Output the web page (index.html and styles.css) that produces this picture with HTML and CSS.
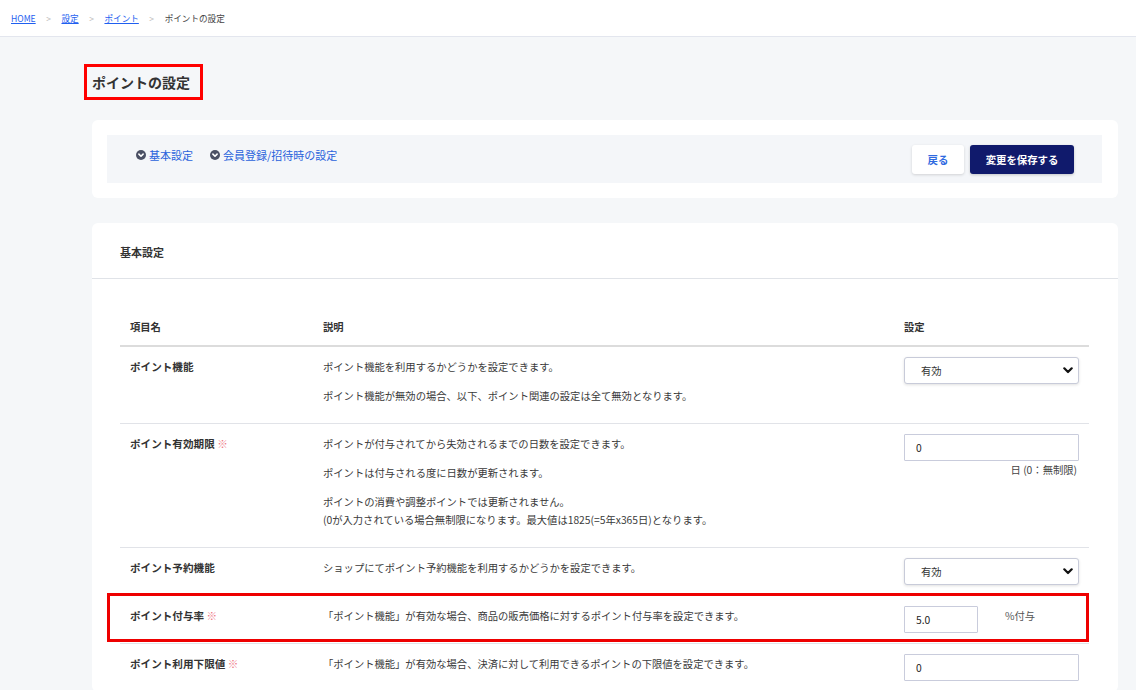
FILE: index.html
```html
<!DOCTYPE html>
<html lang="ja">
<head>
  <meta charset="UTF-8">
  <title>ポイントの設定</title>
  <link rel="stylesheet" href="styles.css">
</head>
<body>

  <nav class="breadcrumb">
    <a href="#">HOME</a>
    <span class="sep">&gt;</span>
    <a href="#">設定</a>
    <span class="sep">&gt;</span>
    <a href="#">ポイント</a>
    <span class="sep">&gt;</span>
    <span class="current">ポイントの設定</span>
  </nav>

  <main class="main">
    <h1 class="page-title">ポイントの設定</h1>

    <!-- anchor links and actions -->
    <section class="card">
      <div class="toolbar">
        <div class="anchors">
          <a href="#" class="anchor">
            <svg width="10" height="10" viewBox="0 0 10 10"><circle cx="5" cy="5" r="5" fill="#4b5064"/><path d="M2.9 4.1 5 6.2 7.1 4.1" fill="none" stroke="#fff" stroke-width="1.6" stroke-linecap="round" stroke-linejoin="round"/></svg>
            基本設定
          </a>
          <a href="#" class="anchor">
            <svg width="10" height="10" viewBox="0 0 10 10"><circle cx="5" cy="5" r="5" fill="#4b5064"/><path d="M2.9 4.1 5 6.2 7.1 4.1" fill="none" stroke="#fff" stroke-width="1.6" stroke-linecap="round" stroke-linejoin="round"/></svg>
            会員登録/招待時の設定
          </a>
        </div>
        <div class="actions">
          <button class="btn btn-back">戻る</button>
          <button class="btn btn-save">変更を保存する</button>
        </div>
      </div>
    </section>

    <!-- basic settings -->
    <section class="card settings">
      <div class="card-header">基本設定</div>
      <div class="card-body">
        <div class="grid">
          <div class="row head">
            <div class="cell">項目名</div>
            <div class="cell">説明</div>
            <div class="cell">設定</div>
          </div>

          <div class="row">
            <div class="cell label">ポイント機能</div>
            <div class="cell desc">
              <p>ポイント機能を利用するかどうかを設定できます。</p>
              <p>ポイント機能が無効の場合、以下、ポイント関連の設定は全て無効となります。</p>
            </div>
            <div class="cell">
              <div class="select">有効</div>
            </div>
          </div>

          <div class="row">
            <div class="cell label">ポイント有効期限 <span class="req">※</span></div>
            <div class="cell desc">
              <p>ポイントが付与されてから失効されるまでの日数を設定できます。</p>
              <p>ポイントは付与される度に日数が更新されます。</p>
              <p>ポイントの消費や調整ポイントでは更新されません。<br>(0が入力されている場合無制限になります。最大値は1825(=5年x365日)となります。</p>
            </div>
            <div class="cell">
              <input class="input" type="text" value="0">
              <div class="note">日 (0：無制限)</div>
            </div>
          </div>

          <div class="row">
            <div class="cell label">ポイント予約機能</div>
            <div class="cell desc">
              <p>ショップにてポイント予約機能を利用するかどうかを設定できます。</p>
            </div>
            <div class="cell">
              <div class="select">有効</div>
            </div>
          </div>

          <div class="row marked">
            <div class="cell label">ポイント付与率 <span class="req">※</span></div>
            <div class="cell desc">
              <p>「ポイント機能」が有効な場合、商品の販売価格に対するポイント付与率を設定できます。</p>
            </div>
            <div class="cell inline">
              <input class="input short" type="text" value="5.0">
              <span class="unit">%付与</span>
            </div>
          </div>

          <div class="row">
            <div class="cell label">ポイント利用下限値 <span class="req">※</span></div>
            <div class="cell desc">
              <p>「ポイント機能」が有効な場合、決済に対して利用できるポイントの下限値を設定できます。</p>
            </div>
            <div class="cell">
              <input class="input" type="text" value="0">
            </div>
          </div>
        </div>
      </div>
    </section>
  </main>

</body>
</html>
```

FILE: styles.css
```css
html, body {
  overflow: hidden;
}

body {
  margin: 0;
  font-family: "Noto Sans CJK JP", "Noto Sans", sans-serif;
  color: #333;
  background-color: #f5f7f9;
}

/* Breadcrumb */
.breadcrumb {
  height: 36px;
  display: flex;
  align-items: center;
  gap: 10.5px;
  padding-left: 11px;
  background-color: #fff;
  border-bottom: 1px solid #e3e6ee;
  font-size: 8.6px;
}

.breadcrumb a {
  color: #1f5ff0;
}

.breadcrumb .sep {
  color: #bbb;
}

.breadcrumb .current {
  color: #444;
}

.main {
  padding: 27px 18px 0 92px;
}

.page-title {
  display: inline-block;
  margin: 0 0 20px -8px;
  padding: 5px 10px 5px 5px;
  font-size: 14px;
  line-height: 20px;
  color: #333;
  border: 3px solid #f00;
}

/* Cards */
.card {
  background-color: #fff;
  border-radius: 6px;
  margin-bottom: 25px;
}

.card:first-of-type {
  padding: 15px 16px 15px 15px;
}

.toolbar {
  height: 48px;
  display: flex;
  justify-content: space-between;
  align-items: center;
  padding: 0 28px 0 29px;
  background-color: #f4f6f9;
}

.anchors {
  display: flex;
  gap: 17px;
  align-self: flex-start;
  padding-top: 11px;
}

.anchor {
  display: flex;
  align-items: center;
  gap: 3px;
  font-size: 11px;
  line-height: 18px;
  color: #2a63dc;
  text-decoration: none;
}

.actions {
  display: flex;
  gap: 6px;
}

.btn {
  height: 29px;
  border: none;
  border-radius: 3px;
  font-family: inherit;
  font-size: 10.4px;
  font-weight: bold;
  cursor: pointer;
}

.btn-back {
  width: 52px;
  background-color: #fff;
  color: #2f6ae0;
  box-shadow: 0 1px 3px rgba(0, 0, 0, 0.15);
}

.btn-save {
  width: 104px;
  background-color: #101a6c;
  color: #fff;
  box-shadow: 0 1px 3px rgba(0, 0, 0, 0.2);
}

/* Settings table */
.card-header {
  padding: 20px 28px 17px;
  font-size: 11px;
  font-weight: bold;
  line-height: 18px;
  border-bottom: 1px solid #e0e3e8;
}

.card-body {
  padding: 26px 29px 0 28px;
}

.row {
  display: grid;
  grid-template-columns: 193px 581px 195px;
  border-bottom: 1px solid #e1e3e8;
  font-size: 10.3px;
  line-height: 18px;
}

.row.head {
  border-bottom: 2px solid #dcdcdc;
  font-weight: bold;
}

.row.head .cell {
  padding: 13px 10px 9px;
}

.cell {
  padding: 10px 10px 9px;
}

.label {
  padding-top: 11px;
  font-size: 10.6px;
  font-weight: bold;
}

.req {
  color: #ee7482;
  font-weight: normal;
}

.desc {
  padding-top: 11px;
  color: #3a3a3a;
}

.desc p {
  margin: 0 0 11px;
}

.desc p:last-child {
  margin-bottom: 9px;
}

.select {
  height: 27px;
  box-sizing: border-box;
  display: flex;
  align-items: center;
  padding-left: 16px;
  border: 1px solid #c8cbd9;
  border-radius: 3px;
  box-shadow: 0 1px 3px rgba(0, 0, 0, 0.12);
  background: #fff url("data:image/svg+xml;utf8,<svg xmlns='http://www.w3.org/2000/svg' width='10' height='7' viewBox='0 0 10 7'><path d='M1.3 1.3 5 5 8.7 1.3' fill='none' stroke='%23111' stroke-width='2.2' stroke-linecap='round' stroke-linejoin='round'/></svg>") no-repeat right 5px center;
  font-size: 10.3px;
}

.input {
  width: 175px;
  height: 27px;
  box-sizing: border-box;
  padding: 0 11px;
  border: 1px solid #c9ccdc;
  border-radius: 1px;
  font-family: inherit;
  font-size: 10.3px;
  color: #222;
}

.input.short {
  width: 74px;
}

.note {
  text-align: right;
  padding-right: 2px;
  line-height: 18px;
  color: #444;
}

.inline {
  display: flex;
  align-items: flex-start;
  gap: 27px;
}

.unit {
  color: #555;
  line-height: 20px;
}

/* annotation box */
.marked {
  position: relative;
}

.marked::after {
  content: "";
  position: absolute;
  left: -13px;
  right: 0;
  top: -3px;
  bottom: 1px;
  border: 3px solid #e00;
  pointer-events: none;
}
```
